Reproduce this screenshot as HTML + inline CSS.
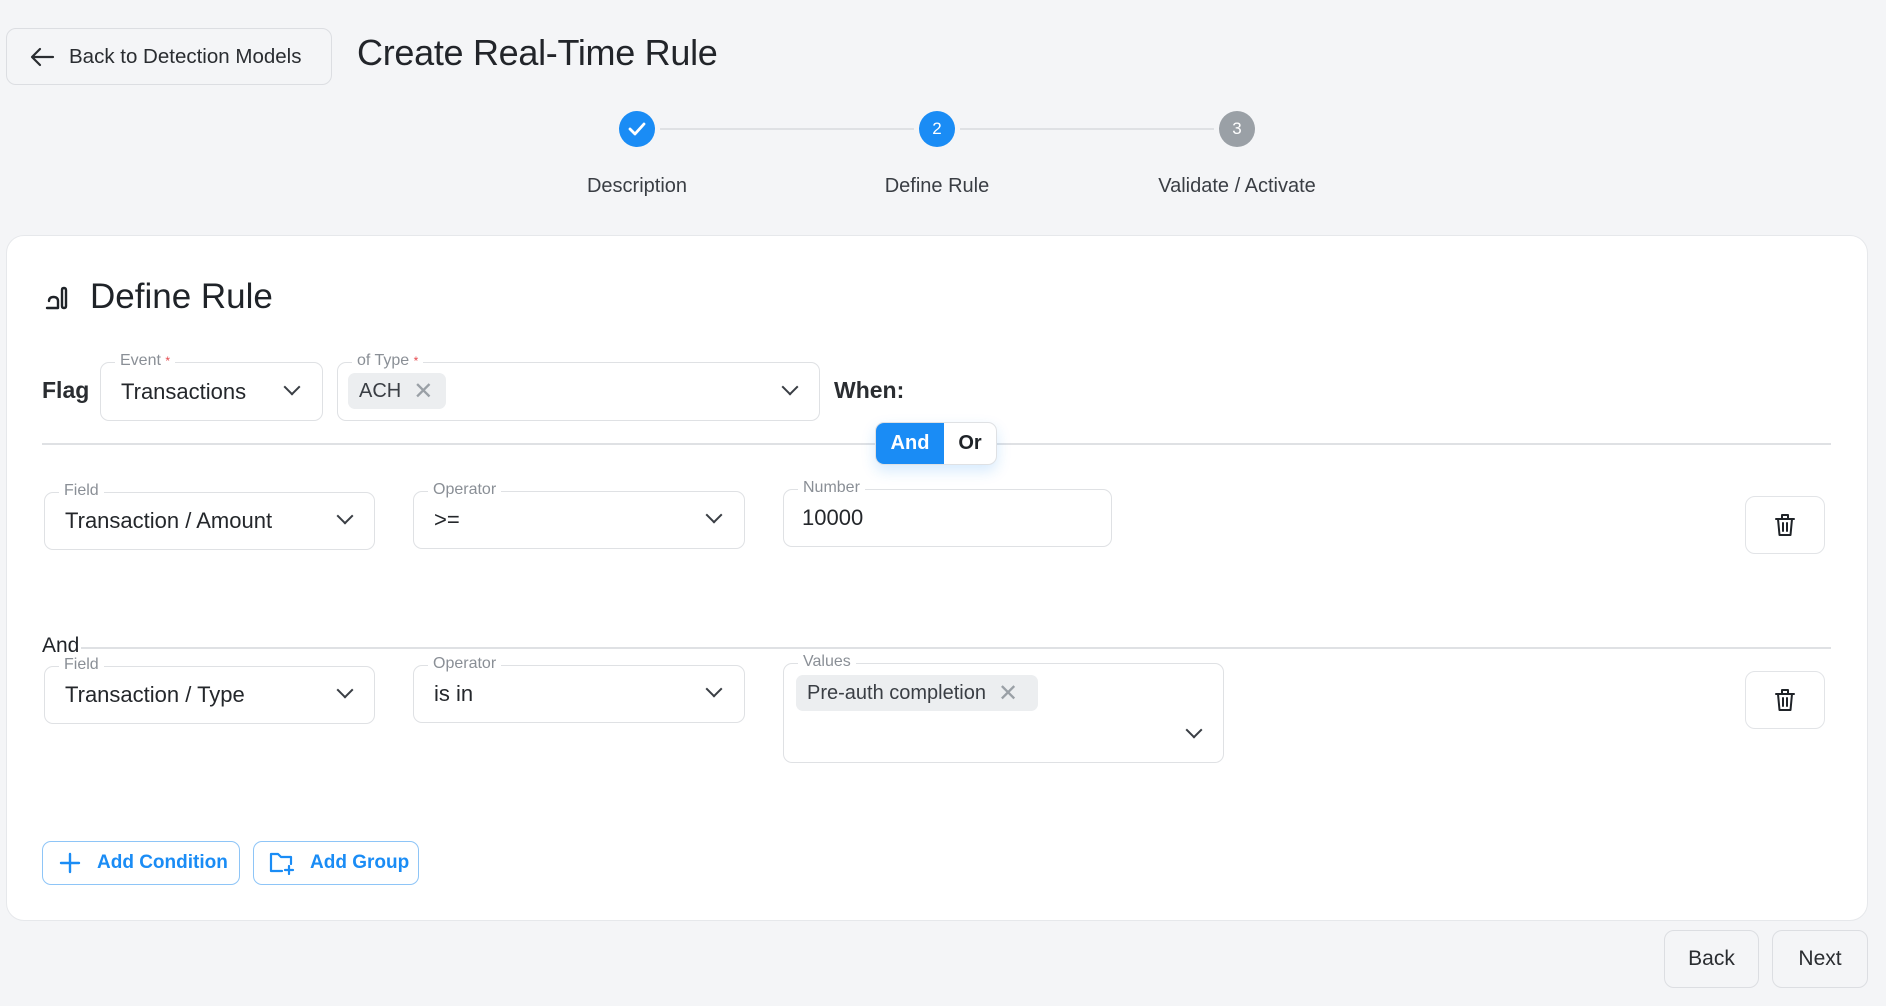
<!DOCTYPE html>
<html><head><meta charset="utf-8"><style>
*{box-sizing:border-box;margin:0;padding:0}
body{width:1886px;height:1006px;background:#f4f5f7;font-family:"Liberation Sans",sans-serif;color:#1f2328;position:relative;overflow:hidden}
.abs{position:absolute}
.btn{position:absolute;border:1.5px solid #dcdee2;border-radius:10px;background:#f4f5f7;display:flex;align-items:center;justify-content:center;font-size:21px;color:#2a2d31}
.card{position:absolute;left:6px;top:235px;width:1862px;height:686px;background:#fff;border:1px solid #e6e8eb;border-radius:18px}
.box{position:absolute;border:1.5px solid #dfe1e4;border-radius:9px;background:#fff}
.lbl{position:absolute;top:-12px;left:14px;background:#fff;padding:0 5px;font-size:16px;color:#8a8f96;line-height:20px}
.lbl b{color:#e5484d;font-weight:normal;font-size:12px;vertical-align:top}
.val{position:absolute;left:20px;font-size:22px;color:#24272b}
.chev{position:absolute;width:12px;height:12px;border-right:2px solid #3a3e44;border-bottom:2px solid #3a3e44;transform:rotate(45deg)}
.chip{position:absolute;background:#eceef0;border-radius:7px;font-size:20px;color:#3a3e44;display:flex;align-items:center;padding-left:11px}
.x{color:#9aa0a6;font-size:24px;margin-left:12px;font-weight:300}
.circ{position:absolute;width:36px;height:36px;border-radius:50%;display:flex;align-items:center;justify-content:center;color:#fff;font-size:17px}
.step{position:absolute;top:175px;font-size:20px;color:#3a3e44;width:240px;text-align:center}
.line{position:absolute;height:2px;background:#dfe1e4}
.del{position:absolute;width:80px;height:58px;border:1.5px solid #e2e4e7;border-radius:10px;display:flex;align-items:center;justify-content:center}
.add{position:absolute;border:1.5px solid #8ec5f7;border-radius:9px;color:#1a8cf5;font-size:19px;font-weight:bold;display:flex;align-items:center;height:44px;top:841px}
</style></head><body>
<div class="btn" style="left:6px;top:28px;width:326px;height:57px;justify-content:flex-start;padding-left:22px">
<svg width="26" height="22" viewBox="0 0 26 22"><path d="M24 11H4M11 3L3 11l8 8" fill="none" stroke="#2a2d31" stroke-width="2.2" stroke-linecap="round" stroke-linejoin="round"/></svg>
<span style="margin-left:14px;font-size:20.5px">Back to Detection Models</span></div>
<div class="abs" style="left:357px;top:32px;font-size:36px;color:#22252a;letter-spacing:-0.3px">Create Real-Time Rule</div>

<div class="line" style="left:660px;top:128px;width:254px"></div>
<div class="line" style="left:960px;top:128px;width:254px"></div>
<div class="circ" style="left:619px;top:111px;background:#1a8cf5"><svg width="20" height="16" viewBox="0 0 20 16"><path d="M3 8l5 5L17 3" fill="none" stroke="#fff" stroke-width="2.8" stroke-linecap="round" stroke-linejoin="round"/></svg></div>
<div class="circ" style="left:919px;top:111px;background:#1a8cf5">2</div>
<div class="circ" style="left:1219px;top:111px;background:#9aa0a6">3</div>
<div class="step" style="left:517px">Description</div>
<div class="step" style="left:817px">Define Rule</div>
<div class="step" style="left:1117px">Validate / Activate</div>

<div class="card"></div>
<svg class="abs" style="left:44px;top:284px" width="30" height="28" viewBox="0 0 30 28"><path d="M5 17Q5 13 9.5 13Q14 13 14 17V24H3M18 6V22Q18 24 20 24Q22 24 22 22V6Q22 4 20 4Q18 4 18 6" fill="none" stroke="#1f2328" stroke-width="2.4" stroke-linecap="round" stroke-linejoin="round"/></svg>
<div class="abs" style="left:90px;top:277px;font-size:35px;color:#1f2328">Define Rule</div>

<div class="abs" style="left:42px;top:377px;font-size:23px;font-weight:bold;color:#2a2d31">Flag</div>
<div class="box" style="left:100px;top:362px;width:223px;height:59px"><div class="lbl">Event <b>*</b></div><div class="val" style="top:16px">Transactions</div><div class="chev" style="left:185px;top:18px"></div></div>
<div class="box" style="left:337px;top:362px;width:483px;height:59px"><div class="lbl">of Type <b>*</b></div><div class="chip" style="left:10px;top:10px;width:98px;height:36px">ACH<span class="x">✕</span></div><div class="chev" style="left:446px;top:18px"></div></div>
<div class="abs" style="left:834px;top:377px;font-size:23px;font-weight:bold;color:#2a2d31">When:</div>

<div class="line" style="left:42px;top:443px;width:1789px;height:1.5px"></div>
<div class="abs" style="left:875px;top:422px;width:122px;height:43px;border:1.5px solid #dfe1e4;border-radius:9px;background:#fff;box-shadow:0 6px 14px rgba(26,140,245,0.18);overflow:hidden;display:flex">
<div style="width:68px;background:#1a8cf5;color:#fff;font-weight:bold;font-size:20px;display:flex;align-items:center;justify-content:center">And</div>
<div style="flex:1;color:#1f2328;font-weight:bold;font-size:20px;display:flex;align-items:center;justify-content:center">Or</div></div>

<div class="box" style="left:44px;top:492px;width:331px;height:58px"><div class="lbl">Field</div><div class="val" style="top:15px">Transaction / Amount</div><div class="chev" style="left:294px;top:17px"></div></div>
<div class="box" style="left:413px;top:491px;width:332px;height:58px"><div class="lbl">Operator</div><div class="val" style="top:15px">&gt;=</div><div class="chev" style="left:294px;top:17px"></div></div>
<div class="box" style="left:783px;top:489px;width:329px;height:58px"><div class="lbl">Number</div><div class="val" style="left:18px;top:15px">10000</div></div>
<div class="del" style="left:1745px;top:496px"><svg width="24" height="26" viewBox="0 0 24 26"><path d="M3 7h18M9 7V3h6v4M5 7l1.5 16h11L19 7M10 11v8M14 11v8" fill="none" stroke="#1f2328" stroke-width="2" stroke-linecap="round" stroke-linejoin="round"/></svg></div>

<div class="abs" style="left:42px;top:634px;font-size:21px;color:#1f2328">And</div>
<div class="line" style="left:81px;top:647px;width:1750px;height:1.5px"></div>

<div class="box" style="left:44px;top:666px;width:331px;height:58px"><div class="lbl">Field</div><div class="val" style="top:15px">Transaction / Type</div><div class="chev" style="left:294px;top:17px"></div></div>
<div class="box" style="left:413px;top:665px;width:332px;height:58px"><div class="lbl">Operator</div><div class="val" style="top:15px">is in</div><div class="chev" style="left:294px;top:17px"></div></div>
<div class="box" style="left:783px;top:663px;width:441px;height:100px"><div class="lbl">Values</div><div class="chip" style="left:12px;top:11px;width:242px;height:36px">Pre-auth completion<span class="x">✕</span></div><div class="chev" style="left:404px;top:60px"></div></div>
<div class="del" style="left:1745px;top:671px"><svg width="24" height="26" viewBox="0 0 24 26"><path d="M3 7h18M9 7V3h6v4M5 7l1.5 16h11L19 7M10 11v8M14 11v8" fill="none" stroke="#1f2328" stroke-width="2" stroke-linecap="round" stroke-linejoin="round"/></svg></div>

<div class="add" style="left:42px;width:198px;padding-left:16px"><svg width="22" height="22" viewBox="0 0 22 22"><path d="M11 2v18M2 11h18" stroke="#1a8cf5" stroke-width="2.4" stroke-linecap="round"/></svg><span style="margin-left:16px">Add Condition</span></div>
<div class="add" style="left:253px;width:166px;padding-left:14px"><svg width="28" height="24" viewBox="0 0 28 24"><path d="M14 20H3V3h7l3 3h10v7M21 15v8M17 19h8" fill="none" stroke="#1a8cf5" stroke-width="2.2" stroke-linecap="round" stroke-linejoin="round"/></svg><span style="margin-left:14px">Add Group</span></div>

<div class="btn" style="left:1664px;top:930px;width:95px;height:58px">Back</div>
<div class="btn" style="left:1772px;top:930px;width:96px;height:58px">Next</div>
</body></html>
